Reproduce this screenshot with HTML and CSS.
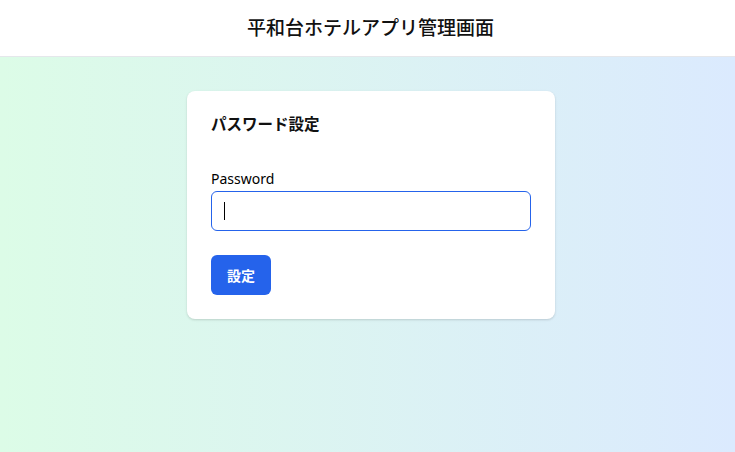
FILE: index.html
```html
<!DOCTYPE html>
<html lang="ja">
<head>
<meta charset="utf-8">
<title>平和台ホテルアプリ管理画面</title>
<link rel="stylesheet" href="styles.css">
</head>
<body>
<header class="header">
  <h1 class="header-title">平和台ホテルアプリ管理画面</h1>
</header>
<main class="main">
  <section class="card">
    <h2 class="card-title">パスワード設定</h2>
    <form class="form">
      <label class="label" for="pw">Password</label>
      <div class="input-wrap">
        <input class="input" id="pw" type="password">
        <span class="caret"></span>
      </div>
      <button class="btn" type="button">設定</button>
    </form>
  </section>
</main>
</body>
</html>
```
FILE: styles.css
```css
* { box-sizing: border-box; }
html, body { margin: 0; padding: 0; height: 100%; }
body {
  font-family: "Noto Sans", "Noto Sans CJK JP", sans-serif;
  color: #111827;
  background: linear-gradient(to right, #dcfce7, #dbeafe);
}
.header {
  height: 57px;
  background: #fff;
  border-bottom: 1px solid #e5e7eb;
  display: flex;
  align-items: center;
  justify-content: center;
  padding: 0 0 3px 6px;
}
.header-title {
  margin: 0;
  font-size: 19px;
  font-weight: 500;
  line-height: 28px;
  font-family: "Noto Sans CJK JP", sans-serif;
  color: #111;
}
.main {
  display: flex;
  justify-content: center;
  padding: 34px 0 0 7px;
}
.card {
  width: 368px;
  background: #fff;
  border-radius: 8px;
  padding: 24px;
  box-shadow: 0 1px 3px rgba(0,0,0,0.1), 0 1px 2px rgba(0,0,0,0.06);
}
.card-title {
  margin: 0 0 38px;
  font-size: 15.5px;
  line-height: 16px;
  font-weight: 700;
  font-family: "Noto Sans CJK JP", sans-serif;
  color: #111;
}
.form { display: flex; flex-direction: column; }
.label {
  font-size: 14px;
  line-height: 20px;
  font-weight: 400;
  color: #000;
  margin-bottom: 2px;
}
.input-wrap { position: relative; }
.input {
  display: block;
  width: 320px;
  height: 40px;
  border: 1px solid #2563eb;
  border-radius: 6px;
  padding: 0 12px;
  outline: none;
  font-size: 14px;
  background: #fff;
}
.caret {
  position: absolute;
  left: 13px;
  top: 11px;
  width: 1px;
  height: 18px;
  background: #000;
}
.btn {
  align-self: flex-start;
  margin-top: 24px;
  width: 60px;
  height: 40px;
  border: none;
  border-radius: 6px;
  background: #2563eb;
  color: #fff;
  font-size: 14px;
  font-weight: 700;
  font-family: "Noto Sans CJK JP", sans-serif;
  cursor: pointer;
}
```
